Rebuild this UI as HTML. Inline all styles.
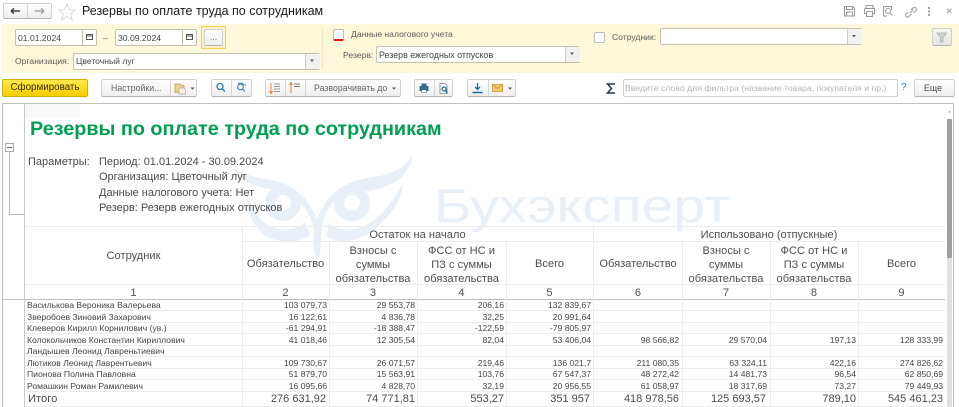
<!DOCTYPE html>
<html><head><meta charset="utf-8">
<style>
html,body{margin:0;padding:0;background:#fff}
body{width:959px;height:407px;position:relative;overflow:hidden;font-family:"Liberation Sans",Arial,sans-serif;color:#3c3c3c}
.a,.t,.r,.c,.b,.hl,.vl{position:absolute}
.t,.r,.c{white-space:nowrap}
.r{text-align:right}.c{text-align:center}
.b{box-sizing:border-box;border:1px solid #d0d0d0;border-bottom-color:#b5b5b5;border-radius:2px;background:linear-gradient(#fdfdfd,#efefef)}
.f{position:absolute;box-sizing:border-box;border:1px solid #c4c0ae;border-radius:2px;background:#fff;height:17px}
.hl{height:1px;background:#ececec}
.vl{width:1px;background:#ececec}
.d{font-size:8.6px;line-height:11px;color:#444}
.h{font-size:11.1px;line-height:14px;color:#4f4f4f}
.i{font-size:11px;line-height:15px;color:#4a4a4a}
.s{position:absolute;top:0;left:0}
.l{font-size:8.6px;color:#5e5e5e;line-height:12px}
</style></head><body>

<!-- title bar -->
<div class="b" style="left:3px;top:3px;width:49px;height:16px"></div>
<div class="a" style="left:27px;top:4px;width:1px;height:14px;background:#d5d5d5"></div>
<svg class="s" width="959" height="110">
<path d="M11 11h9M11 11l3-2.500M11 11l3 2.500" stroke="#444" stroke-width="1.500" fill="none"/>
<path d="M35 11h9M44 11l-3-2.500M44 11l-3 2.500" stroke="#a5a5a5" stroke-width="1.500" fill="none"/>
<path d="M67 4l2.300 5.600 6 .4-4.600 3.800 1.500 5.900-5.200-3.200-5.200 3.200 1.500-5.900-4.600-3.800 6-.4z" fill="#fff" stroke="#d8d8d8"/>
<g fill="none" stroke="#9a9a9a">
<path d="M844.500 6.500h8l2 2v7.500h-10z"/><path d="M846.500 6.500v3h6v-3M846.500 16v-4h6v4"/>
<path d="M866 8.500v-3h7v3M864.500 8.500h10v5h-2M866.500 13.500h-2v-5M866.500 11.500h6v5h-6z"/>
<path d="M887 16h-3.500V6.500h8V10"/><circle cx="888" cy="11" r="2.500"/><path d="M890 13l2.500 2.500"/>
<path d="M908 12l-1.800 1.800c-1.800 2 1 4.500 3 2.600l2.300-2.300M911 10l2-2c1.800-2 4.600.6 2.800 2.600L913.500 13M909.500 13.500l4-4"/>
<path d="M929 7v2M929 10.500v2M929 14v2" stroke-width="1.500" stroke="#808080"/>
<path d="M947 8.500l4.500 4.500M951.500 8.500l-4.500 4.500" stroke="#a0a0a0"/>
</g>
</svg>
<div class="t" style="left:82px;top:3px;font-size:12.5px;line-height:16px;color:#1a1a1a">Резервы по оплате труда по сотрудникам</div>

<!-- yellow panel -->
<div class="a" style="left:2px;top:24px;width:957px;height:49px;background:#fdf8d9"></div>
<div class="a" style="left:322px;top:28px;height:41px;border-left:1px dotted #ddd8b8"></div>

<div class="f" style="left:15px;top:29px;width:82px"></div>
<div class="a" style="left:82px;top:30px;width:1px;height:15px;background:#c4c0ae"></div>
<div class="t l" style="left:18px;top:32px;color:#444">01.01.2024</div>
<div class="t l" style="left:103px;top:32px">–</div>
<div class="f" style="left:115px;top:29px;width:82px"></div>
<div class="a" style="left:182px;top:30px;width:1px;height:15px;background:#c4c0ae"></div>
<div class="t l" style="left:118px;top:32px;color:#444">30.09.2024</div>
<svg class="s" width="959" height="110">
<g fill="none" stroke="#555"><path d="M86.500 34.500h6v5h-6zM86.500 36h6"/><path d="M186.500 34.500h6v5h-6zM186.500 36h6"/></g>
</svg>
<div class="a" style="left:201px;top:26px;width:25px;height:23px;box-sizing:border-box;border:1px solid #f0cf55;background:#fdf3c4"></div>
<div class="b c" style="left:204px;top:29px;width:19px;height:17px;font-size:9px;line-height:15px;color:#777">...</div>

<div class="t l" style="left:15px;top:55px">Организация:</div>
<div class="f" style="left:73px;top:53px;width:247px"></div>
<div class="a" style="left:305px;top:54px;width:14px;height:15px;background:#f1f1f1;border-left:1px solid #ccc"></div>
<div class="t l" style="left:76px;top:55px;color:#444">Цветочный луг</div>

<div class="a" style="left:333px;top:29px;width:11px;height:12px;box-sizing:border-box;border:1px solid #bbb;border-bottom:2px solid #f01010;border-radius:2px;background:#fff"></div>
<div class="t l" style="left:351px;top:28px">Данные налогового учета</div>
<div class="t l" style="left:343px;top:49px">Резерв:</div>
<div class="f" style="left:376px;top:46px;width:204px"></div>
<div class="a" style="left:565px;top:47px;width:14px;height:15px;background:#f1f1f1;border-left:1px solid #ccc"></div>
<div class="t" style="left:379px;top:49px;font-size:8.9px;line-height:12px;color:#444">Резерв ежегодных отпусков</div>

<div class="a" style="left:594px;top:32px;width:11px;height:11px;box-sizing:border-box;border:1px solid #bbb;border-radius:2px;background:#fff"></div>
<div class="t l" style="left:612px;top:31px">Сотрудник:</div>
<div class="f" style="left:660px;top:28px;width:202px"></div>
<div class="a" style="left:847px;top:29px;width:14px;height:15px;background:#f1f1f1;border-left:1px solid #ccc"></div>
<div class="b" style="left:932px;top:28px;width:20px;height:18px;background:linear-gradient(#f5f5ef,#e6e6e0)"></div>
<svg class="s" width="959" height="110">
<g fill="#555"><path d="M310 59.500h4l-2 2.500z"/><path d="M570 52.500h4l-2 2.500z"/><path d="M852 35h4l-2 2.500z"/></g>
<path d="M937 33h9.500l-3.500 4.500v4.500h-2.500v-4.500z" fill="#cfd4d8" stroke="#a9aeb3" stroke-width=".8"/>
</svg>

<!-- toolbar -->
<div class="b c" style="left:2px;top:79px;width:86px;height:18px;background:linear-gradient(#ffe94a,#f7cd00);border-color:#d6b000;font-size:9.8px;line-height:16px;color:#3a2d00">Сформировать</div>
<div class="b" style="left:101px;top:79px;width:96px;height:18px"></div>
<div class="a" style="left:170px;top:80px;width:1px;height:16px;background:#d5d5d5"></div>
<div class="t" style="left:111px;top:81px;font-size:8.8px;line-height:14px;color:#666">Настройки...</div>
<div class="b" style="left:211px;top:79px;width:41px;height:18px"></div>
<div class="a" style="left:231px;top:80px;width:1px;height:16px;background:#d5d5d5"></div>
<div class="b" style="left:265px;top:79px;width:136px;height:18px"></div>
<div class="a" style="left:285px;top:80px;width:1px;height:16px;background:#d5d5d5"></div>
<div class="a" style="left:305px;top:80px;width:1px;height:16px;background:#d5d5d5"></div>
<div class="t" style="left:314px;top:81px;font-size:8.8px;line-height:14px;color:#666">Разворачивать до</div>
<div class="b" style="left:414px;top:79px;width:39px;height:18px"></div>
<div class="a" style="left:434px;top:80px;width:1px;height:16px;background:#d5d5d5"></div>
<div class="b" style="left:467px;top:79px;width:49px;height:18px"></div>
<div class="a" style="left:488px;top:80px;width:1px;height:16px;background:#d5d5d5"></div>
<svg class="s" width="959" height="110">
<path d="M175 84h5l1 1.500h3v7h-9z" fill="#f0cf8a" stroke="#bf9a50" stroke-width=".8"/>
<path d="M179 88h5l1.500 1.500v4.500H179z" fill="#fbf3e0" stroke="#a9a9a9" stroke-width=".7"/>
<path d="M190.500 87.500h4l-2 2.200z" fill="#555"/>
<circle cx="220" cy="86.500" r="3" fill="none" stroke="#2d7ca8" stroke-width="1.300"/><path d="M222 88.500l3 3" stroke="#2d7ca8" stroke-width="1.500"/>
<circle cx="240.500" cy="87" r="2.800" fill="none" stroke="#3d7c9c" stroke-width="1.100"/><path d="M242.500 89l2.500 2.500M238 83.300h4l2 1.500M246 85.500l-1.500 -1" stroke="#3d7c9c" stroke-width="1" fill="none"/>
<path d="M271 83v10M269.500 91l1.500 2.500 1.500-2.500" stroke="#ea7d3a" fill="none"/><path d="M274 84h6M274 86.500h6M274 89h6M274 91.500h6" stroke="#999"/>
<path d="M291 93V83M289.500 85l1.500-2.500 1.500 2.500" stroke="#ea7d3a" fill="none"/><path d="M294 84h6M294 86.500h6" stroke="#777"/>
<path d="M392 87.500h4l-2 2.200z" fill="#555"/>
<path d="M419.500 86h9v5h-2v2h-5v-2h-2zM421.500 83.500h5V86h-5z" fill="#2f6f92"/><path d="M422 90h4v2.500h-4z" fill="#fff"/>
<path d="M440 83.500h5l2 2v8h-7z" fill="#fff" stroke="#8f9aa2"/><circle cx="444" cy="89" r="2" fill="none" stroke="#1f6f95" stroke-width="1.300"/><path d="M445.500 90.500l2 2.500" stroke="#1f6f95" stroke-width="1.500"/>
<path d="M477.500 83v6M475 87l2.500 2.500 2.500-2.500" stroke="#1d6a92" stroke-width="1.300" fill="none"/><path d="M472.500 92.500h10" stroke="#1d6a92" stroke-width="1.500"/>
<rect x="492.500" y="84.500" width="10" height="7" fill="#f2c770" stroke="#d8a84b"/><path d="M492.500 84.500l5 4 5-4" fill="none" stroke="#c98f2e" stroke-width=".8"/>
<path d="M508 87.500h4l-2 2.200z" fill="#555"/>
<path d="M615 84h-7.500l4 4.500-4 4.500h7.500" fill="none" stroke="#26384a" stroke-width="1.500"/>
<path d="M946.500 87.500h4l-2 2.200z" fill="#555"/>
</svg>
<div class="a" style="left:623px;top:79px;width:275px;height:18px;box-sizing:border-box;border:1px solid #cfcfcf;border-radius:2px;background:#fff"></div>
<div class="t" style="left:625px;top:82px;font-size:8.7px;line-height:12px;color:#b4b4b4">Введите слово для фильтра (название товара, покупателя и пр.)</div>
<div class="t" style="left:901px;top:81px;font-size:10px;line-height:13px;color:#2a85c2">?</div>
<div class="b" style="left:914px;top:79px;width:41px;height:18px"></div>
<div class="t" style="left:924px;top:81px;font-size:8.8px;line-height:14px;color:#4a4a4a">Еще</div>

<!-- report frame -->
<div class="a" style="left:2px;top:103px;width:952px;height:304px;border:1px solid #c0c0c0;border-bottom:0;box-sizing:border-box;background:#fff"></div>
<div class="a" style="left:25px;top:104px;width:55px;height:13px;background:#f8f8f8"></div>
<div class="a" style="left:24px;top:104px;width:1px;height:303px;background:#c9c9c9"></div>
<div class="a" style="left:947px;top:119px;width:5px;height:139px;background:#a0a0a0;border-radius:1px"></div>
<div class="a" style="left:947px;top:258px;width:5px;height:149px;background:#e0e0e0"></div>
<svg class="s" width="959" height="120"><path d="M948 112.500h3l-1.500-2z" fill="#aaa"/></svg>

<!-- watermark -->
<svg class="s" width="959" height="407">
<g fill="#e8eff6">
<path d="M233 167c10 8 24 11 38 13 14 2 25 9 34 19 6 7 10 15 12 23 2-10 8-21 17-29 9-8 20-13 34-15 22-3 37-9 44-23-1 15-12 27-30 33-16 5-32 3-44 10-12 8-16 22-17 40l-2 20-4-20c-2-16-6-28-17-38-11-9-24-10-37-13-13-3-23-9-28-20z"/>
<path d="M247 194c-1 24 12 44 34 47 12 2 23-1 30-7-3-4-5-8-6-12-7 6-16 9-26 7-16-3-26-16-32-35z"/>
<path d="M403 183c-1 14-9 28-19 37-12 13-26 21-41 21-6 0-12-2-17-5l3-13c6 5 15 8 25 6 20-3 36-22 49-46z"/>
<path d="M317 216l3.500 12v20l-3.500 14-3.500-14v-20z"/>
</g>
<g fill="none" stroke="#e8eff6"><circle cx="283" cy="203" r="13" stroke-width="10"/><circle cx="352" cy="203" r="13" stroke-width="10"/></g>
<text x="434" y="222" font-family="Liberation Sans" font-size="47" fill="#e8eff6" textLength="296" lengthAdjust="spacingAndGlyphs">Бухэксперт</text>
</svg>

<!-- outline marker -->
<div class="a" style="left:5px;top:143px;width:9px;height:9px;box-sizing:border-box;border:1px solid #aaa;background:#fff"></div>
<div class="a" style="left:7px;top:147px;width:5px;height:1px;background:#666"></div>
<div class="a" style="left:9px;top:152px;width:1px;height:62px;background:#b5b5b5"></div>
<div class="a" style="left:9px;top:214px;width:16px;height:1px;background:#b5b5b5"></div>

<!-- report heading -->
<div class="t" style="left:30px;top:116px;font-size:19.8px;font-weight:bold;line-height:26px;color:#00a050">Резервы по оплате труда по сотрудникам</div>
<div class="t i" style="left:28px;top:155px">Параметры:</div>
<div class="t i" style="left:99px;top:155px">Период: 01.01.2024 - 30.09.2024</div>
<div class="t i" style="left:99px;top:170px">Организация: Цветочный луг</div>
<div class="t i" style="left:99px;top:186px">Данные налогового учета: Нет</div>
<div class="t i" style="left:99px;top:201px">Резерв: Резерв ежегодных отпусков</div>

<!-- table lines -->
<div class="hl" style="left:25px;top:226px;width:920px"></div>
<div class="hl" style="left:242px;top:241px;width:703px"></div>
<div class="hl" style="left:25px;top:284px;width:920px"></div>
<div class="hl" style="left:3px;top:299px;width:942px;background:#c0c0c0"></div>
<div class="hl" style="left:25px;top:310px;width:920px"></div>
<div class="hl" style="left:25px;top:322px;width:920px"></div>
<div class="hl" style="left:25px;top:333px;width:920px"></div>
<div class="hl" style="left:25px;top:345px;width:920px"></div>
<div class="hl" style="left:25px;top:356px;width:920px"></div>
<div class="hl" style="left:25px;top:368px;width:920px"></div>
<div class="hl" style="left:25px;top:379px;width:920px"></div>
<div class="hl" style="left:25px;top:391px;width:920px"></div>
<div class="hl" style="left:25px;top:406px;width:920px"></div>
<div class="vl" style="left:242px;top:226px;height:181px"></div>
<div class="vl" style="left:329px;top:241px;height:166px"></div>
<div class="vl" style="left:417px;top:241px;height:166px"></div>
<div class="vl" style="left:506px;top:241px;height:166px"></div>
<div class="vl" style="left:593px;top:226px;height:181px"></div>
<div class="vl" style="left:682px;top:241px;height:166px"></div>
<div class="vl" style="left:770px;top:241px;height:166px"></div>
<div class="vl" style="left:858px;top:241px;height:166px"></div>

<!-- header text -->
<div class="c h" style="left:242px;top:228px;width:351px">Остаток на начало</div>
<div class="c h" style="left:593px;top:228px;width:352px">Использовано (отпускные)</div>
<div class="c h" style="left:25px;top:249px;width:217px">Сотрудник</div>
<div class="c h" style="left:242px;top:257px;width:87px">Обязательство</div>
<div class="c h" style="left:329px;top:244px;width:88px">Взносы с<br>суммы<br>обязательства</div>
<div class="c h" style="left:417px;top:244px;width:89px">ФСС от НС и<br>ПЗ с суммы<br>обязательства</div>
<div class="c h" style="left:506px;top:257px;width:87px">Всего</div>
<div class="c h" style="left:594px;top:257px;width:88px">Обязательство</div>
<div class="c h" style="left:682px;top:244px;width:88px">Взносы с<br>суммы<br>обязательства</div>
<div class="c h" style="left:770px;top:244px;width:88px">ФСС от НС и<br>ПЗ с суммы<br>обязательства</div>
<div class="c h" style="left:858px;top:257px;width:87px">Всего</div>
<div class="c h" style="left:25px;top:286px;width:217px">1</div>
<div class="c h" style="left:242px;top:286px;width:87px">2</div>
<div class="c h" style="left:329px;top:286px;width:88px">3</div>
<div class="c h" style="left:417px;top:286px;width:89px">4</div>
<div class="c h" style="left:506px;top:286px;width:87px">5</div>
<div class="c h" style="left:594px;top:286px;width:88px">6</div>
<div class="c h" style="left:682px;top:286px;width:88px">7</div>
<div class="c h" style="left:770px;top:286px;width:88px">8</div>
<div class="c h" style="left:858px;top:286px;width:87px">9</div>

<!-- names -->
<div class="t d" style="left:27px;top:300px">Василькова Вероника Валерьева</div>
<div class="t d" style="left:27px;top:312px">Зверобоев Зиновий Захарович</div>
<div class="t d" style="left:27px;top:323px">Клеверов Кирилл Корнилович (ув.)</div>
<div class="t d" style="left:27px;top:335px">Колокольчиков Константин Кириллович</div>
<div class="t d" style="left:27px;top:346px">Ландышев Леонид Лавреньтиевич</div>
<div class="t d" style="left:27px;top:358px">Лютиков Леонид Лаврентьевич</div>
<div class="t d" style="left:27px;top:369px">Пионова Полина Павловна</div>
<div class="t d" style="left:27px;top:381px">Ромашкин Роман Рамилевич</div>

<!-- col 2 -->
<div class="r d" style="right:632px;top:300px">103 079,73</div>
<div class="r d" style="right:632px;top:312px">16 122,61</div>
<div class="r d" style="right:632px;top:323px">-61 294,91</div>
<div class="r d" style="right:632px;top:335px">41 018,46</div>
<div class="r d" style="right:632px;top:358px">109 730,67</div>
<div class="r d" style="right:632px;top:369px">51 879,70</div>
<div class="r d" style="right:632px;top:381px">16 095,66</div>
<!-- col 3 -->
<div class="r d" style="right:544px;top:300px">29 553,78</div>
<div class="r d" style="right:544px;top:312px">4 836,78</div>
<div class="r d" style="right:544px;top:323px">-18 388,47</div>
<div class="r d" style="right:544px;top:335px">12 305,54</div>
<div class="r d" style="right:544px;top:358px">26 071,57</div>
<div class="r d" style="right:544px;top:369px">15 563,91</div>
<div class="r d" style="right:544px;top:381px">4 828,70</div>
<!-- col 4 -->
<div class="r d" style="right:455px;top:300px">206,16</div>
<div class="r d" style="right:455px;top:312px">32,25</div>
<div class="r d" style="right:455px;top:323px">-122,59</div>
<div class="r d" style="right:455px;top:335px">82,04</div>
<div class="r d" style="right:455px;top:358px">219,46</div>
<div class="r d" style="right:455px;top:369px">103,76</div>
<div class="r d" style="right:455px;top:381px">32,19</div>
<!-- col 5 -->
<div class="r d" style="right:368px;top:300px">132 839,67</div>
<div class="r d" style="right:368px;top:312px">20 991,64</div>
<div class="r d" style="right:368px;top:323px">-79 805,97</div>
<div class="r d" style="right:368px;top:335px">53 406,04</div>
<div class="r d" style="right:368px;top:358px">136 021,7</div>
<div class="r d" style="right:368px;top:369px">67 547,37</div>
<div class="r d" style="right:368px;top:381px">20 956,55</div>
<!-- col 6 -->
<div class="r d" style="right:280px;top:335px">98 566,82</div>
<div class="r d" style="right:280px;top:358px">211 080,35</div>
<div class="r d" style="right:280px;top:369px">48 272,42</div>
<div class="r d" style="right:280px;top:381px">61 058,97</div>
<!-- col 7 -->
<div class="r d" style="right:192px;top:335px">29 570,04</div>
<div class="r d" style="right:192px;top:358px">63 324,11</div>
<div class="r d" style="right:192px;top:369px">14 481,73</div>
<div class="r d" style="right:192px;top:381px">18 317,69</div>
<!-- col 8 -->
<div class="r d" style="right:103px;top:335px">197,13</div>
<div class="r d" style="right:103px;top:358px">422,16</div>
<div class="r d" style="right:103px;top:369px">96,54</div>
<div class="r d" style="right:103px;top:381px">73,27</div>
<!-- col 9 -->
<div class="r d" style="right:16px;top:335px">128 333,99</div>
<div class="r d" style="right:16px;top:358px">274 826,62</div>
<div class="r d" style="right:16px;top:369px">62 850,69</div>
<div class="r d" style="right:16px;top:381px">79 449,93</div>

<!-- totals -->
<div class="t i" style="left:28px;top:392px;font-size:11.2px">Итого</div>
<div class="r i" style="right:633px;top:392px">276 631,92</div>
<div class="r i" style="right:544px;top:392px">74 771,81</div>
<div class="r i" style="right:455px;top:392px">553,27</div>
<div class="r i" style="right:369px;top:392px">351 957</div>
<div class="r i" style="right:280px;top:392px">418 978,56</div>
<div class="r i" style="right:193px;top:392px">125 693,57</div>
<div class="r i" style="right:103px;top:392px">789,10</div>
<div class="r i" style="right:16px;top:392px">545 461,23</div>

</body></html>
